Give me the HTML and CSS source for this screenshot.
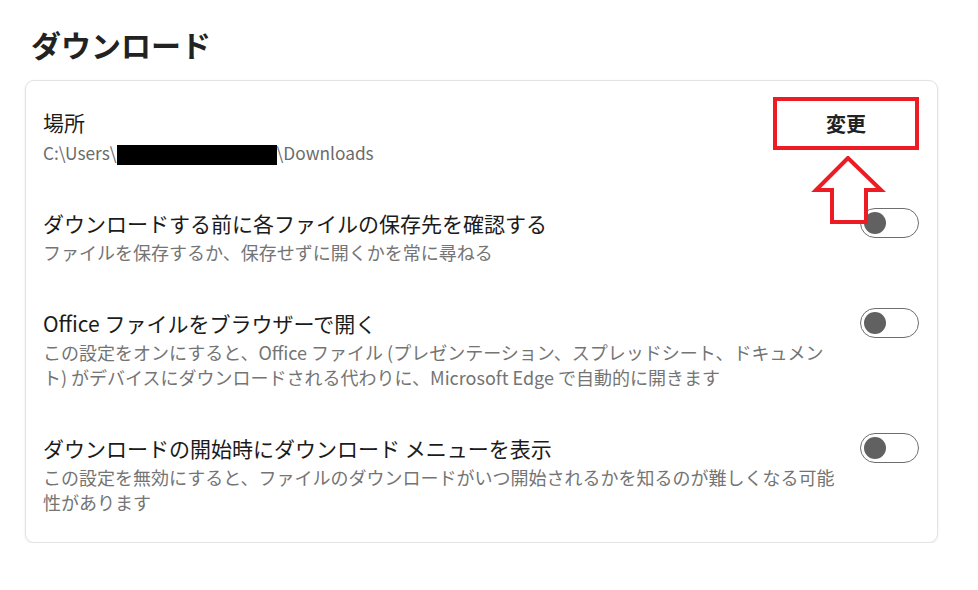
FILE: index.html
```html
<!DOCTYPE html>
<html lang="ja">

<head>
    <meta charset="UTF-8">
    <meta name="viewport" content="width=device-width, initial-scale=1.0">
    <title>ダウンロード</title>
    <link rel="stylesheet" href="styles.css">
</head>

<body>
    <h1 class="page-title">ダウンロード</h1>
    <div class="card">
        <div class="row row-location">
            <div class="text">
                <div class="label">場所</div>
                <div class="path">C:\Users\<span class="redact"></span>\Downloads</div>
            </div>
            <div class="change-btn">変更</div>
        </div>
        <div class="row">
            <div class="text">
                <div class="label">ダウンロードする前に各ファイルの保存先を確認する</div>
                <div class="desc">ファイルを保存するか、保存せずに開くかを常に尋ねる</div>
            </div>
            <div class="toggle"><span class="knob"></span></div>
        </div>
        <div class="row">
            <div class="text">
                <div class="label">Office ファイルをブラウザーで開く</div>
                <div class="desc">この設定をオンにすると、Office ファイル (プレゼンテーション、スプレッドシート、ドキュメント) がデバイスにダウンロードされる代わりに、Microsoft Edge で自動的に開きます</div>
            </div>
            <div class="toggle"><span class="knob"></span></div>
        </div>
        <div class="row">
            <div class="text">
                <div class="label">ダウンロードの開始時にダウンロード メニューを表示</div>
                <div class="desc">この設定を無効にすると、ファイルのダウンロードがいつ開始されるかを知るのが難しくなる可能性があります</div>
            </div>
            <div class="toggle"><span class="knob"></span></div>
        </div>

        <!-- annotation arrow -->
        <svg class="arrow" width="80" height="72" viewBox="0 0 80 72">
            <polygon points="37,2 5,34 21,34 21,66 55,66 55,34 70,34" fill="#fff" stroke="#ed1c24" stroke-width="4" stroke-linejoin="miter"/>
        </svg>
    </div>
</body>

</html>
```

FILE: styles.css
```css
body {
    margin: 0;
    background: #fff;
    font-family: "Noto Sans CJK JP", "Noto Sans", sans-serif;
    color: #1b1b1b;
}

.page-title {
    margin: 24px 0 0 31px;
    font-size: 30px;
    line-height: 40px;
    font-weight: 700;
    color: #222;
}

.card {
    position: relative;
    margin: 16px 0 0 25px;
    width: 913px;
    border: 1px solid #e3e3e3;
    border-radius: 9px;
    box-shadow: 0 1px 3px rgba(0, 0, 0, 0.08);
    padding: 26px 18px 27px 17px;
    box-sizing: border-box;
    background: #fff;
}

.row {
    display: flex;
    justify-content: space-between;
    align-items: flex-start;
    margin-top: 43px;
}

.row-location {
    margin-top: 0;
}

.text {
    width: 794px;
}

.label {
    font-size: 21px;
    line-height: 30px;
    color: #1b1b1b;
}

.path {
    margin-top: 3px;
    font-size: 17.3px;
    line-height: 25px;
    color: #6b6b6b;
}

.redact {
    display: inline-block;
    width: 160px;
    height: 20px;
    background: #000;
    vertical-align: -5px;
}

.desc {
    margin-top: 2px;
    font-size: 18px;
    line-height: 25px;
    color: #747474;
}

.change-btn {
    flex-shrink: 0;
    margin-top: -10px;
    width: 146px;
    height: 53px;
    box-sizing: border-box;
    border: 4px solid #ed1c24;
    font-size: 20px;
    font-weight: 700;
    line-height: 45px;
    text-align: center;
    color: #222;
}

.toggle {
    position: relative;
    flex-shrink: 0;
    margin-top: 0;
    width: 59px;
    height: 30px;
    box-sizing: border-box;
    border: 1px solid #6e6e6e;
    border-radius: 15px;
}

.knob {
    position: absolute;
    left: 3px;
    top: 3px;
    width: 22px;
    height: 22px;
    border-radius: 50%;
    background: #616161;
}

.arrow {
    position: absolute;
    left: 785px;
    top: 75px;
}
```
